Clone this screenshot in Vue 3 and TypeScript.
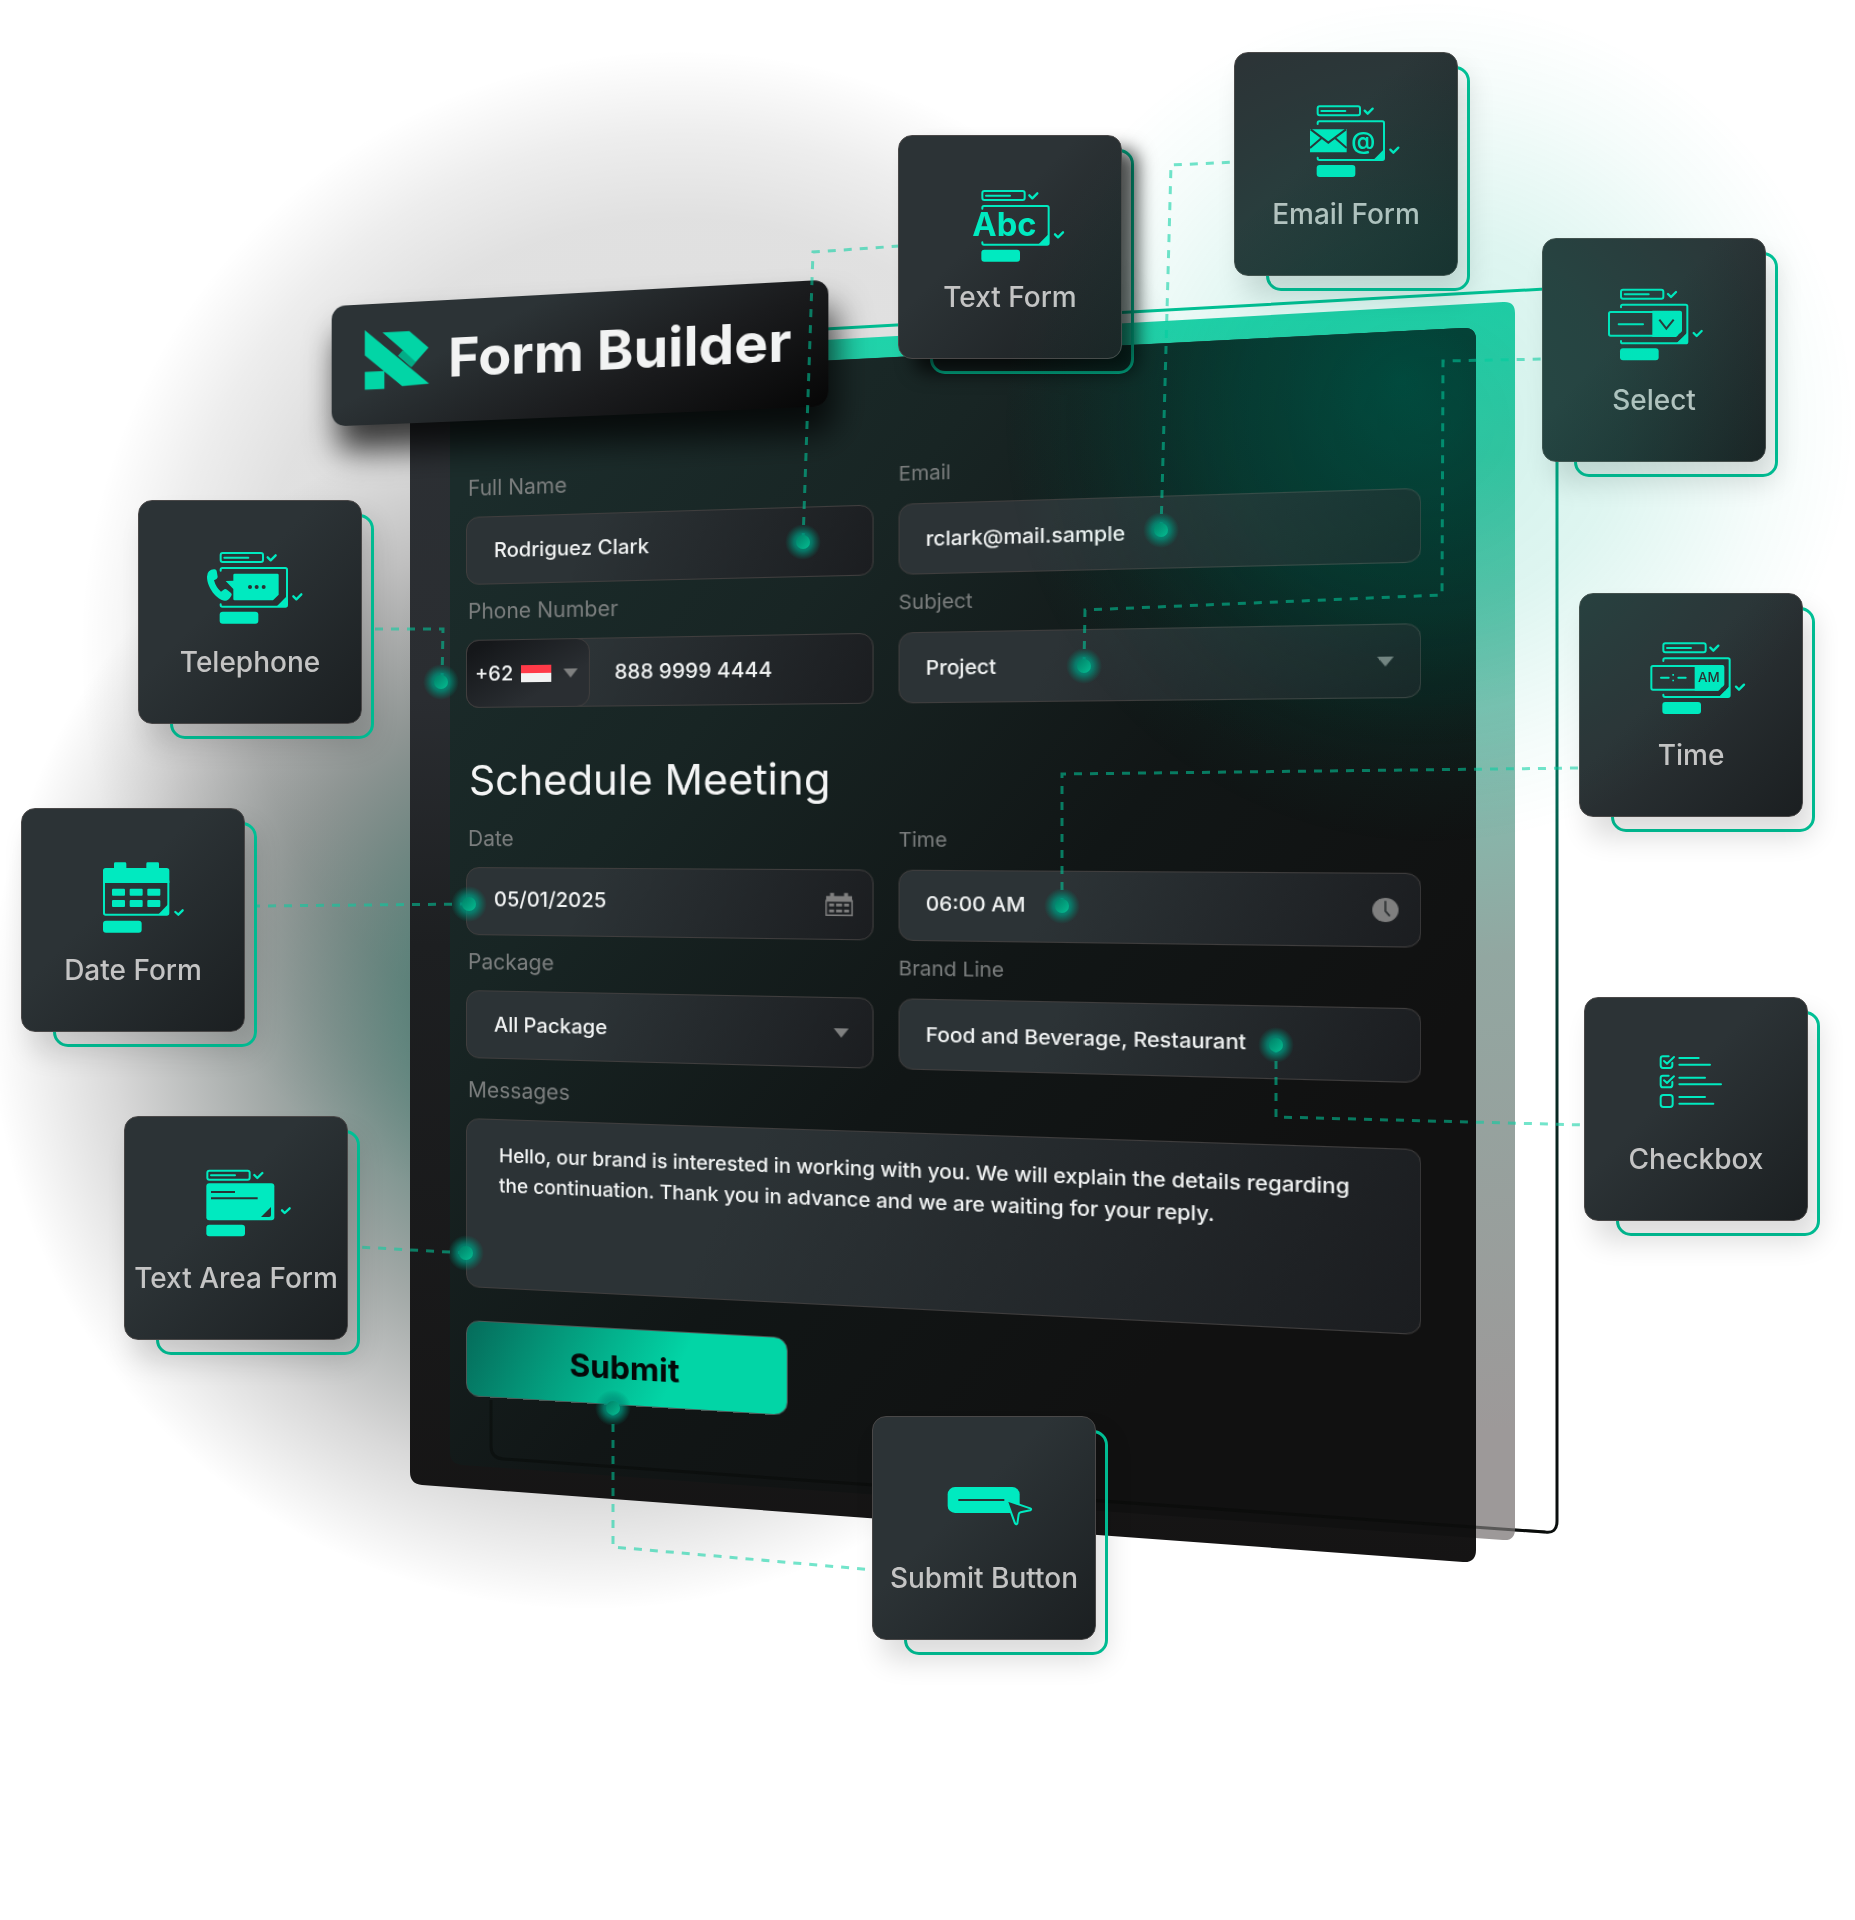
<script setup lang="ts">
import { ref } from 'vue'

type Kind = 'text' | 'email' | 'select' | 'phone' | 'time' | 'date' | 'area' | 'check' | 'submit'

interface Node {
  kind: Kind
  label: string
  x: number
  y: number
  ix: number
  iy: number
}

const WIDTH = 1855
const HEIGHT = 1920

// ix / iy: origin of the icon inside the card, in icon units (3 per pixel)
const nodes: Node[] = [
  { kind: 'text', label: 'Text Form', x: 898, y: 135, ix: 250, iy: 165 },
  { kind: 'email', label: 'Email Form', x: 1234, y: 52, ix: 248, iy: 160 },
  { kind: 'select', label: 'Select', x: 1542, y: 238, ix: 234, iy: 152 },
  { kind: 'phone', label: 'Telephone', x: 138, y: 500, ix: 245, iy: 156 },
  { kind: 'time', label: 'Time', x: 1579, y: 593, ix: 250, iy: 148 },
  { kind: 'date', label: 'Date Form', x: 21, y: 808, ix: 246, iy: 163 },
  { kind: 'area', label: 'Text Area Form', x: 124, y: 1116, ix: 247, iy: 161 },
  { kind: 'check', label: 'Checkbox', x: 1584, y: 997, ix: 227, iy: 175 },
  { kind: 'submit', label: 'Submit Button', x: 872, y: 1416, ix: 227, iy: 213 },
]

const links: string[] = [
  'M803 541 L813 252 L900 246',
  'M1161 530 L1171 165 L1236 162',
  'M1084 665 L1085 610 L1442 595 L1443 361 L1544 359',
  'M442 681 L443 629 L374 629',
  'M1062 906 V774 L1580 768',
  'M468 904 L257 906',
  'M466 1253 L358 1247',
  'M1276 1045 V1117 L1586 1125',
  'M613 1408 V1547 L874 1570',
]

const dots: [number, number][] = [
  [803, 542], [1161, 530], [1084, 666], [441, 682], [1062, 906],
  [469, 904], [466, 1253], [1276, 1045], [613, 1408],
]

const place = (n: Node) => ({
  left: `${(n.x / WIDTH) * 100}%`,
  top: `${(n.y / HEIGHT) * 100}%`,
})

const fullName = ref('Rodriguez Clark')
const email = ref('rclark@mail.sample')
const phone = ref('888 9999 4444')
const date = ref('05/01/2025')
const time = ref('06:00 AM')
const brand = ref('Food and Beverage, Restaurant')
const message = ref(
  'Hello, our brand is interested in working with you. We will explain the details regarding the continuation. Thank you in advance and we are waiting for your reply.',
)
</script>

<template>
  <main class="scene">
    <svg class="layer" viewBox="0 0 1855 1920" aria-hidden="true">
      <defs>
        <radialGradient id="haze-top" gradientUnits="userSpaceOnUse" cx="680" cy="650" r="600">
          <stop offset="0" stop-color="#000" stop-opacity=".13" />
          <stop offset=".72" stop-color="#000" stop-opacity=".12" />
          <stop offset=".86" stop-color="#000" stop-opacity=".07" />
          <stop offset="1" stop-color="#000" stop-opacity="0" />
        </radialGradient>
        <radialGradient id="haze-low" gradientUnits="userSpaceOnUse" cx="590" cy="1010" r="600">
          <stop offset="0" stop-color="#00463a" stop-opacity=".8" />
          <stop offset=".32" stop-color="#0a4438" stop-opacity=".6" />
          <stop offset=".56" stop-color="#0a1c17" stop-opacity=".38" />
          <stop offset=".8" stop-color="#000" stop-opacity=".15" />
          <stop offset="1" stop-color="#000" stop-opacity="0" />
        </radialGradient>
        <linearGradient id="mint" x1="0" y1="0" x2=".1" y2="1">
          <stop offset="0" stop-color="#12d9ad" />
          <stop offset=".22" stop-color="#3ac6a3" />
          <stop offset=".42" stop-color="#7fc2b2" />
          <stop offset=".62" stop-color="#92a7a1" />
          <stop offset="1" stop-color="#9d9999" />
        </linearGradient>
        <linearGradient id="edge" x1="0" y1="0" x2="0" y2="1">
          <stop offset="0" stop-color="#00c496" />
          <stop offset=".3" stop-color="#00846a" />
          <stop offset=".6" stop-color="#08332b" />
          <stop offset=".8" stop-color="#0b0f0e" />
        </linearGradient>
        <linearGradient id="slab" x1="0" y1="0" x2="0" y2="1">
          <stop offset="0" stop-color="#2c3034" />
          <stop offset=".3" stop-color="#2a2d31" />
          <stop offset=".5" stop-color="#1d1f21" />
          <stop offset="1" stop-color="#151414" />
        </linearGradient>
        <linearGradient id="face" x1=".1" y1=".05" x2=".8" y2=".75">
          <stop offset="0" stop-color="#1b2c2b" />
          <stop offset=".3" stop-color="#182524" />
          <stop offset=".65" stop-color="#111616" />
          <stop offset="1" stop-color="#111" />
        </linearGradient>
        <radialGradient id="face-glow" gradientUnits="userSpaceOnUse" cx="1400" cy="380" r="400">
          <stop offset="0" stop-color="#003830" stop-opacity=".9" />
          <stop offset=".5" stop-color="#003029" stop-opacity=".5" />
          <stop offset="1" stop-color="#00241f" stop-opacity="0" />
        </radialGradient>
      </defs>
      <circle cx="680" cy="650" r="600" fill="url(#haze-top)" />
      <circle cx="590" cy="1010" r="600" fill="url(#haze-low)" />
      <path d="M500 347 L1545 289 Q1557 288 1557 300 V1521 Q1557 1534 1545 1532 L503 1459 Q491 1458 491 1446 V360 Q491 348 500 347 Z" fill="none" stroke="url(#edge)" stroke-width="3" />
      <path d="M450 361 L1503 302 Q1515 301 1515 313 V1529 Q1515 1541 1503 1540 L450 1464 Z" fill="url(#mint)" />
      <path d="M422 381 L1463 328 Q1476 327 1476 340 V1550 Q1476 1563 1463 1562 L422 1485 Q410 1484 410 1472 V393 Q410 382 422 381 Z" fill="url(#slab)" />
      <path d="M450 380 L1463 328 Q1476 327 1476 340 V1538 L462 1465 Q450 1464 450 1452 Z" fill="url(#face)" />
      <path d="M450 380 L1463 328 Q1476 327 1476 340 V1538 L462 1465 Q450 1464 450 1452 Z" fill="url(#face-glow)" />
      <path d="M491 1400 V1446 Q491 1458 503 1459 L1545 1532" fill="none" stroke="#060807" stroke-opacity=".45" stroke-width="3" />
    </svg>

    <form class="plane" @submit.prevent>
      <header class="banner">
        <svg class="logo" viewBox="0 0 196 182" aria-hidden="true">
          <path d="M0 0 L196 170 L114 174 L0 76Z M0 126 H60 V180 H0Z M54 10 H136 L194 62 L142 118 L102 82 L118 68Z" fill="#02d5a6" />
          <path d="M116 66 L155 103 L142 118 L102 82Z" fill="#03ab86" />
        </svg>
        <h1>Form Builder</h1>
      </header>

      <div class="row first">
        <div class="cell">
          <label for="full-name">Full Name</label>
          <div class="field"><input id="full-name" v-model="fullName" type="text" /></div>
        </div>
        <div class="cell">
          <label for="email">Email</label>
          <div class="field"><input id="email" v-model="email" type="email" /></div>
        </div>
      </div>

      <div class="row">
        <div class="cell">
          <label for="phone">Phone Number</label>
          <div class="field phone">
            <div class="code">
              <select aria-label="Country code"><option>+62</option></select>
              <span class="flag"></span>
              <svg class="arrow" viewBox="0 0 14 9" aria-hidden="true"><path d="M0 0H14L7 9Z" /></svg>
            </div>
            <input id="phone" v-model="phone" type="tel" />
          </div>
        </div>
        <div class="cell">
          <label for="subject">Subject</label>
          <div class="field">
            <select id="subject"><option>Project</option></select>
            <svg class="arrow" viewBox="0 0 14 9" aria-hidden="true"><path d="M0 0H14L7 9Z" /></svg>
          </div>
        </div>
      </div>

      <h2>Schedule Meeting</h2>

      <div class="row meeting">
        <div class="cell">
          <label for="date">Date</label>
          <div class="field">
            <input id="date" v-model="date" type="text" />
            <svg class="glyph" viewBox="0 0 28 24" aria-hidden="true">
              <path d="M1 3H5V0H9V3H19V0H23V3H27V9H1Z" />
              <path d="M1 8H27V23H1Z" fill="none" stroke="#7f7f7f" stroke-width="1.5" />
              <path d="M4 11H9V14H4ZM11 11H17V14H11ZM19 11H24V14H19ZM4 17H9V20H4ZM11 17H17V20H11ZM19 17H24V20H19Z" />
            </svg>
          </div>
        </div>
        <div class="cell">
          <label for="time">Time</label>
          <div class="field">
            <input id="time" v-model="time" type="text" />
            <svg class="glyph clock" viewBox="0 0 24 24" aria-hidden="true">
              <circle cx="12" cy="12" r="12" />
              <path d="M12 3V13L16 18" fill="none" stroke="#25292b" stroke-width="1.6" />
            </svg>
          </div>
        </div>
      </div>

      <div class="row">
        <div class="cell">
          <label for="package">Package</label>
          <div class="field">
            <select id="package"><option>All Package</option></select>
            <svg class="arrow" viewBox="0 0 14 9" aria-hidden="true"><path d="M0 0H14L7 9Z" /></svg>
          </div>
        </div>
        <div class="cell">
          <label for="brand">Brand Line</label>
          <div class="field"><input id="brand" v-model="brand" type="text" /></div>
        </div>
      </div>

      <div class="cell messages">
        <label for="messages">Messages</label>
        <textarea id="messages" v-model="message"></textarea>
      </div>

      <button class="send" type="submit">Submit</button>
    </form>

    <svg class="layer over" viewBox="0 0 1855 1920" aria-hidden="true">
      <defs>
        <radialGradient id="dot-glow">
          <stop offset="0" stop-color="#00a684" />
          <stop offset=".5" stop-color="#00907a" stop-opacity=".75" />
          <stop offset="1" stop-color="#00806a" stop-opacity="0" />
        </radialGradient>
        <linearGradient id="dot-core" x1="0" y1="0" x2="1" y2="1">
          <stop offset="0" stop-color="#007f66" />
          <stop offset="1" stop-color="#05bd92" />
        </linearGradient>
      </defs>
      <path v-for="d in links" :key="d" :d="d" class="link" />
      <g v-for="([cx, cy], i) in dots" :key="i">
        <circle :cx="cx" :cy="cy" r="18" fill="url(#dot-glow)" />
        <circle :cx="cx" :cy="cy" r="7" fill="url(#dot-core)" />
      </g>
    </svg>

    <section v-for="n in nodes" :key="n.kind" class="node" :class="n.kind" :style="place(n)">
      <div class="card">
        <svg class="icon" viewBox="0 0 672 441" aria-hidden="true">
          <g :transform="`translate(${n.ix} ${n.iy})`">
            <g v-if="!['date', 'check', 'submit'].includes(n.kind)">
              <rect class="line" x="3" y="3" width="127" height="27" rx="6" />
              <path class="line" d="M14 17H86" />
              <path class="line tick" d="M144 16L153 25L168 10" />
              <template v-if="n.kind !== 'area'">
                <path class="line" d="M3 56V53Q3 48 8 48H197Q202 48 202 53V159Q202 164 197 164H8Q3 164 3 159V157" />
                <path class="line tick" d="M221 133L230 142L245 127" />
                <path d="M170 164L202 132V164Z" />
                <rect y="179" width="116" height="36" rx="9" />
              </template>
            </g>

            <text v-if="n.kind === 'text'" class="abc" x="-27" y="137">Abc</text>

            <template v-else-if="n.kind === 'email'">
              <path d="M-20 72H90V141H-20Z" />
              <path class="cut" d="M-18 72L35 112L88 72 M-20 128L14 99 M90 128L56 99" />
              <text class="at" x="104" y="130">@</text>
            </template>

            <template v-else-if="n.kind === 'select'">
              <rect class="line" x="-33" y="70" width="215" height="71" rx="5" />
              <path d="M97 66H180Q186 66 186 72V128L168 145H97Z" />
              <path class="corner" d="M190 124V146H168Z" />
              <path class="line" d="M-4 107H69" />
              <path class="cut" d="M118 93L139 120L161 93" />
              <path d="M170 164L202 132V164Z" />
            </template>

            <template v-else-if="n.kind === 'time'">
              <rect class="line" x="-33" y="71" width="215" height="71" rx="5" />
              <path d="M97 68H180Q186 68 186 74V128L168 145H97Z" />
              <path class="corner" d="M190 124V146H168Z" />
              <path class="line" d="M-4 106H19 M48 106H70" />
              <path d="M30 95H35V100H30ZM30 112H35V117H30Z" />
              <text class="am" x="107" y="120">AM</text>
              <path d="M170 164L202 132V164Z" />
            </template>

            <template v-else-if="n.kind === 'phone'">
              <path d="M41 69Q41 65 45 65H173Q177 65 177 69V128L160 145H45Q41 145 41 141V111L18 87L41 86Z" />
              <path d="M-32 58Q-25 51 -15 52Q-10 52 -9 57L-6 74Q-6 80 -17 85Q-11 107 4 119L14 112Q18 110 22 113L34 123Q38 127 35 131Q27 146 16 146C-8 144 -38 107 -38 74Q-38 63 -32 58Z" />
              <circle v-for="x in [91, 111, 132]" :key="x" class="hole" :cx="x" cy="105" r="6" />
            </template>

            <template v-else-if="n.kind === 'area'">
              <rect y="41" width="204" height="111" rx="9" />
              <path class="cut" d="M14 67H86 M14 86H154" />
              <path class="hole" d="M164 142L194 112V136Q194 142 188 142Z" />
              <path class="line tick" d="M227 122L235 130L250 116" />
              <rect y="165" width="116" height="35" rx="9" />
            </template>

            <template v-else-if="n.kind === 'date'">
              <path d="M8 17H33V4Q33 0 37 0H66Q70 0 70 4V17H130V4Q130 0 134 0H164Q168 0 168 4V17H191Q199 17 199 25V62H0V25Q0 17 8 17Z" />
              <path class="line" d="M3 56V152Q3 157 8 157H191Q196 157 196 152V56" />
              <path class="line tick" d="M217 149L226 157L239 144" />
              <path d="M165 157L196 125V157Z" />
              <rect v-for="i in 6" :key="i" :x="27 + ((i - 1) % 3) * 53" :y="i > 3 ? 113 : 79" width="39" height="21" rx="3" />
              <rect y="175" width="116" height="36" rx="9" />
            </template>

            <template v-else-if="n.kind === 'check'">
              <path v-for="y in [0, 58]" :key="y" class="line" :transform="`translate(0 ${y})`" d="M27 3H10Q3 3 3 10V30Q3 38 10 38H30Q38 38 38 30V22 M13 17L22 25L43 5" />
              <rect class="line" x="3" y="119" width="36" height="36" rx="8" />
              <path class="line" d="M59 8H117 M59 28H151 M59 67H136 M59 87H184 M59 125H136 M59 145H161" />
            </template>

            <template v-else-if="n.kind === 'submit'">
              <rect width="216" height="78" rx="22" />
              <path class="cut" d="M32 39H170" />
              <path class="cursor" d="M177 40L248 64Q253 67 248 70L219 76Q214 77 213 82L209 110Q205 114 202 109Z" />
            </template>
          </g>
        </svg>
        <p>{{ n.label }}</p>
      </div>
    </section>

    <div class="aura"></div>
  </main>
</template>

<style>
body {
  margin: 0;
  background: #fff;
}
</style>

<style scoped>
.scene {
  position: relative;
  width: 100%;
  aspect-ratio: 1855 / 1920;
  overflow: hidden;
  font-family: Inter, "Liberation Sans", sans-serif;
}
.layer {
  position: absolute;
  inset: 0;
  width: 100%;
  height: 100%;
}
.over {
  pointer-events: none;
}
.link {
  fill: none;
  stroke: #00d0a0;
  stroke-opacity: 0.55;
  stroke-width: 3;
  stroke-dasharray: 8 8;
}

/* the form is one tilted surface, its right side nearer the viewer */
.plane {
  position: absolute;
  left: 25.12%;
  top: 15.57%;
  width: 47.06%;
  transform-origin: 0 509px;
  transform: perspective(1000px) rotateY(-6deg);
}
.banner {
  box-sizing: border-box;
  display: flex;
  align-items: center;
  gap: 19px;
  width: 488px;
  height: 122px;
  margin-left: -137px;
  padding: 0 0 6px 34px;
  border-radius: 14px;
  background: linear-gradient(155deg, #2c3336 30%, #1a1b1d 65%, #060606);
  box-shadow: 6px 26px 32px rgba(0, 0, 0, 0.75);
}
.logo {
  width: 66px;
  height: 61px;
  margin-bottom: 4px;
}
h1 {
  margin: 0;
  color: #f2f3f3;
  font-size: 54px;
  font-weight: 700;
  line-height: 64px;
  white-space: nowrap;
}
h2 {
  margin: 48px 0 0 3px;
  color: #f4f5f5;
  font-size: 41px;
  font-weight: 400;
  line-height: 48px;
}
.row {
  display: grid;
  grid-template-columns: 393fr 457fr;
  gap: 23px;
  margin-top: 15px;
}
.row.first {
  margin-top: 56px;
}
.row.meeting {
  margin-top: 23px;
}
.cell {
  display: flex;
  flex-direction: column;
  gap: 16px;
  min-width: 0;
}
label {
  padding-left: 2px;
  color: #7b7e7e;
  font-size: 21px;
  line-height: 24px;
}
.field,
textarea {
  box-sizing: border-box;
  border: 1px solid #403e3e;
  border-radius: 13px;
  background: linear-gradient(115deg, #2c3336 30%, #1b1d20);
}
.field {
  display: flex;
  align-items: center;
  height: 68px;
  padding: 0 18px 0 27px;
}
input,
select,
textarea {
  color: #f1f3f3;
  font-family: inherit;
  font-size: 20px;
  font-weight: 500;
  outline: 0;
}
input,
select {
  flex: 1;
  min-width: 0;
  padding: 0;
  border: 0;
  background: none;
  appearance: none;
}
.row .cell:last-child label,
.row .cell:last-child input,
.row .cell:last-child select {
  font-size: 19px;
}
.row .cell:last-child .field {
  padding-left: 24px;
}
.row .cell:last-child label {
  padding-left: 0;
}
.meeting input {
  padding-bottom: 4px;
}
.arrow {
  width: 14px;
  height: 9px;
  margin-right: 4px;
  fill: #7f8080;
}
.glyph {
  width: 26px;
  height: 24px;
  fill: #7f7f7f;
}
.clock {
  width: 22px;
}
.row .cell .field.phone {
  padding-left: 0;
  gap: 24px;
}
.code {
  box-sizing: border-box;
  display: flex;
  align-items: center;
  gap: 6px;
  width: 123px;
  height: 68px;
  margin-left: -1px;
  padding: 0 0 0 8px;
  border: 1px solid #403e3e;
  border-radius: 13px;
  background: linear-gradient(150deg, #15171a 10%, #2a2e32 70%);
}
.code select {
  flex: none;
  width: 40px;
}
.code .arrow {
  margin: 0 0 0 6px;
}
.flag {
  width: 30px;
  height: 17px;
  background: linear-gradient(#ff3a48 50%, #f2f2f2 50%);
}
.messages {
  margin-top: 20px;
}
textarea {
  width: 100%;
  height: 169px;
  padding: 21px 30px 20px 32px;
  font-size: 19px;
  line-height: 30px;
  resize: none;
}
.send {
  display: block;
  width: 313px;
  height: 76px;
  margin-top: 33px;
  padding: 0;
  border: 1px solid #4b5a57;
  border-radius: 13px;
  background: linear-gradient(115deg, #056b5a, #02d5a6 65%);
  color: #050808;
  font-family: inherit;
  font-size: 31px;
  font-weight: 700;
}

.node {
  position: absolute;
  width: 224px;
  height: 224px;
}
.node::before {
  content: "";
  position: absolute;
  box-sizing: border-box;
  left: 32px;
  top: 14px;
  width: 204px;
  height: 225px;
  border: 3px solid #00c79b;
  border-radius: 15px;
}
.card {
  position: relative;
  box-sizing: border-box;
  height: 224px;
  border: 1px solid #4a4848;
  border-radius: 14px;
  background: linear-gradient(135deg, #2c3336 40%, #1b1f21);
  box-shadow: 10px 20px 28px rgba(0, 0, 0, 0.14);
}
.text .card {
  box-shadow: 16px 14px 18px rgba(0, 0, 0, 0.7);
}
.icon {
  display: block;
  width: 224px;
  height: 147px;
  margin: -1px;
  fill: #00eac0;
}
.icon .line {
  fill: none;
  stroke: #00eac0;
  stroke-width: 6;
  stroke-linecap: round;
  stroke-linejoin: round;
}
.icon .tick {
  stroke-width: 7;
}
.icon .cut {
  fill: none;
  stroke: #2a3335;
  stroke-width: 6;
}
.icon .hole,
.icon .corner {
  fill: #2a3133;
}
.icon .cursor {
  fill: #2a3133;
  stroke: #00eac0;
  stroke-width: 6;
  stroke-linejoin: round;
}
.abc {
  font-size: 98px;
  font-weight: 700;
}
.at {
  font-size: 72px;
  font-weight: 600;
}
.am {
  fill: #2a3133;
  font-size: 40px;
  font-weight: 500;
}
p {
  margin: 0;
  color: #c4c4c4;
  font-size: 28px;
  font-weight: 500;
  line-height: 32px;
  text-align: center;
  white-space: nowrap;
}
.aura {
  position: absolute;
  left: 54%;
  top: 0;
  width: 46%;
  height: 44%;
  background: radial-gradient(closest-side, rgba(0, 180, 142, 0.18), rgba(0, 180, 142, 0.13) 45%, rgba(0, 180, 142, 0.04) 80%, transparent);
  pointer-events: none;
}
</style>
